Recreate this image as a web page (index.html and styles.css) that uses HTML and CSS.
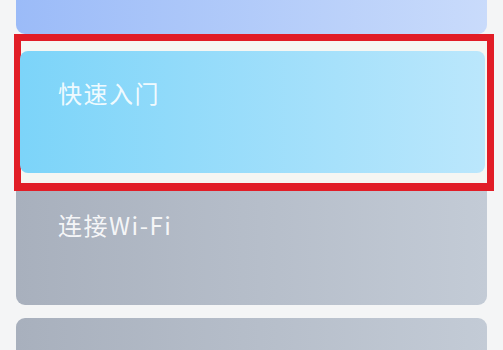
FILE: index.html
```html
<!DOCTYPE html>
<html lang="zh-CN">
<head>
  <meta charset="UTF-8">
  <meta name="viewport" content="width=device-width, initial-scale=1.0">
  <title>帮助</title>
  <link rel="stylesheet" href="styles.css">
</head>
<body>
<div class="menu">
  <div class="card card-top"></div>
  <div class="highlight">
    <div class="card card-blue">
      <span class="label">快速入门</span>
    </div>
  </div>
  <div class="card card-gray">
    <span class="label">连接Wi-Fi</span>
  </div>
  <div class="card card-gray card-next">
    <span class="label">使用指南</span>
  </div>
</div>
</body>
</html>
```

FILE: styles.css
```css
html, body {
  margin: 0;
  height: 100%;
  overflow: hidden;
}
body {
  font-family: "Noto Sans CJK SC", "Noto Sans", sans-serif;
  background-color: #f4f5f6;
}
.menu {
  width: 471px;
  padding: 0 16px;
  display: flex;
  flex-direction: column;
}
.card {
  border-radius: 9px;
  box-sizing: border-box;
  padding-left: 42px;
}
.label {
  display: block;
  color: rgba(255,255,255,0.9);
  font-size: 24px;
  letter-spacing: 1.5px;
  line-height: 30px;
}
.card-top {
  height: 34px;
  border-radius: 0 0 9px 9px;
  background: linear-gradient(90deg, #9bbbf8, #c9dbfb);
}
.highlight {
  margin: 0 -7px 0 -2px;
  border: 7px solid #e11d27;
  border-bottom-width: 8px;
  padding: 10px 0 10px 0;
  background: #f5f6f3;
}
.card-blue {
  height: 122px;
  margin: 0 2px 0 -1px;
  padding-top: 27px;
  padding-left: 38px;
  border-radius: 8px;
  background: linear-gradient(90deg, #7cd4f9, #bbe7fc);
}
.card-gray {
  height: 114px;
  padding-top: 19px;
  border-radius: 0 0 9px 9px;
  background: linear-gradient(90deg, #a8b0bd, #c3cbd6);
}
.card-next {
  margin-top: 13px;
  padding-top: 28px;
  border-radius: 9px;
}
```
